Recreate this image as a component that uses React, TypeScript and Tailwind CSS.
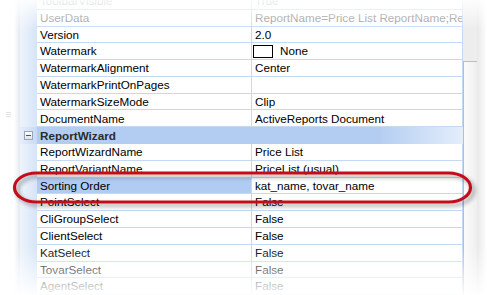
import React from 'react';

type Row = {
  name: string;
  value?: string;
  muted?: boolean;
  swatch?: boolean;
  selected?: boolean;
  category?: boolean;
};

const rows: Row[] = [
  { name: "ToolbarVisible", value: "True", muted: true },
  { name: "UserData", value: "ReportName=Price List ReportName;ReportName", muted: true },
  { name: "Version", value: "2.0" },
  { name: "Watermark", value: "None", swatch: true },
  { name: "WatermarkAlignment", value: "Center" },
  { name: "WatermarkPrintOnPages", value: "" },
  { name: "WatermarkSizeMode", value: "Clip" },
  { name: "DocumentName", value: "ActiveReports Document" },
  { name: "ReportWizard", category: true },
  { name: "ReportWizardName", value: "Price List" },
  { name: "ReportVariantName", value: "PriceList (usual)" },
  { name: "Sorting Order", value: "kat_name, tovar_name", selected: true },
  { name: "PointSelect", value: "False" },
  { name: "CliGroupSelect", value: "False" },
  { name: "ClientSelect", value: "False" },
  { name: "KatSelect", value: "False" },
  { name: "TovarSelect", value: "False" },
  { name: "AgentSelect", value: "False" },
];

const PropertyRow = ({ row }: { row: Row }) => {
  if (row.category) {
    return (
      <div className="flex h-[17px]">
        <div className="w-[17px] h-full flex items-center justify-center bg-gradient-to-r from-[#e6eefa] to-[#c7daf5]">
          <div className="w-[9px] h-[9px] border border-[#9aa7b8] bg-gradient-to-b from-white to-[#dde3ea] flex items-center justify-center">
            <div className="w-[5px] h-px bg-[#4a5564]" />
          </div>
        </div>
        <div className="flex-1 h-full flex items-center pl-[3px] font-bold text-[#2b2b2b] bg-gradient-to-r from-[#b3cdf2] via-[#b3cdf2] via-80% to-[#e4eefb]">
          {row.name}
        </div>
      </div>
    );
  }

  const text = row.muted ? "text-[#8c8c8c]" : "text-black";

  return (
    <div className="flex h-[17px]">
      <div className="w-[17px] h-full bg-gradient-to-r from-[#eef4fc] to-[#d6e4f7]" />
      <div
        className={`w-[215px] h-full flex items-center pl-[3px] border-b border-r border-[#c6d9f3] whitespace-nowrap overflow-hidden ${text} ${
          row.selected ? "bg-[#b1ccf2]" : "bg-white"
        }`}
      >
        {row.name}
      </div>
      <div className={`w-[211px] h-full flex items-center pl-[3px] border-b border-r border-[#c6d9f3] whitespace-nowrap overflow-hidden bg-white ${text}`}>
        {row.swatch && <div className="w-[20px] h-[13px] border border-black bg-white mr-[7px] ml-[-2px] shrink-0" />}
        {row.value}
      </div>
    </div>
  );
};

export default function App() {
  return (
    <div className="relative w-[487px] h-[295px] overflow-hidden bg-white font-['Liberation_Sans',Arial,sans-serif] text-[11.7px] leading-none">
      <div className="flex h-full">
        <div className="w-[20px] h-full bg-gradient-to-r from-white via-white via-70% to-[#e4e9f1] flex items-center justify-center">
          <div className="flex flex-col gap-px mb-[66px] mr-[4px]">
            <div className="w-[5px] h-px bg-[#e2e2e2]" />
            <div className="w-[5px] h-px bg-[#e2e2e2]" />
            <div className="w-[5px] h-px bg-[#e2e2e2]" />
          </div>
        </div>
        <div className="flex flex-col mt-[-7px]">
          {rows.map((row, i) => (
            <PropertyRow key={i} row={row} />
          ))}
        </div>
        <div className="w-[14px] h-full flex flex-col">
          <div className="h-[61px] bg-[#ededed]" />
          <div className="flex-1 border-t border-l border-[#bdbdbd] bg-gradient-to-r from-[#fbfbfb] to-[#efefef]" />
        </div>
        <div className="flex-1 h-full bg-gradient-to-r from-[#e8e8e8] to-white" />
      </div>

      {/* fade at the top and bottom edges */}
      <div className="absolute inset-x-0 top-0 h-[30px] bg-gradient-to-b from-white/90 to-white/0 pointer-events-none" />
      <div className="absolute inset-x-0 bottom-0 h-[48px] bg-gradient-to-t from-white/95 to-white/0 pointer-events-none" />

      {/* red highlight around the selected property */}
      <svg className="absolute left-0 top-0 pointer-events-none" width="487" height="295">
        <defs>
          <filter id="sh" x="-10%" y="-50%" width="120%" height="200%">
            <feDropShadow dx="3" dy="3" stdDeviation="2" floodColor="#000" floodOpacity="0.35" />
          </filter>
        </defs>
        <rect x="14.5" y="173" width="456" height="29" rx="22" ry="14.5" fill="none" stroke="#c3111b" strokeWidth="3.2" filter="url(#sh)" />
      </svg>
    </div>
  );
}
